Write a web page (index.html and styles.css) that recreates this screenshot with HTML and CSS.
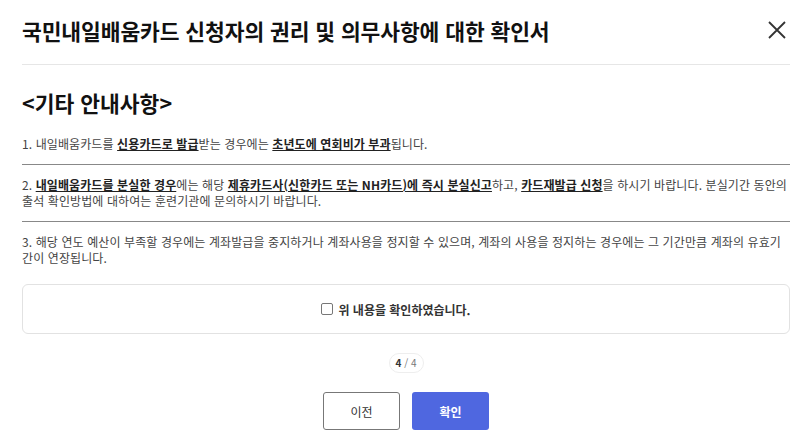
FILE: index.html
```html
<!DOCTYPE html>
<html lang="ko">
<head>
<meta charset="utf-8">
<link rel="stylesheet" href="styles.css">
</head>
<body>
<div class="modal">
  <header class="head">
    <h1 class="title">국민내일배움카드 신청자의 권리 및 의무사항에 대한 확인서</h1>
    <button class="close" aria-label="닫기">
      <svg width="18" height="18" viewBox="0 0 18 18"><path d="M1 1L17 17M17 1L1 17" stroke="#333" stroke-width="1.8" fill="none"/></svg>
    </button>
  </header>
  <h2 class="sub">&lt;기타 안내사항&gt;</h2>
  <ol class="items">
    <li class="item">1. 내일배움카드를 <b>신용카드로 발급</b>받는 경우에는 <b>초년도에 연회비가 부과</b>됩니다.</li>
    <li class="item">2. <b>내일배움카드를 분실한 경우</b>에는 해당 <b>제휴카드사(신한카드 또는 NH카드)에 즉시 분실신고</b>하고, <b>카드재발급 신청</b>을 하시기 바랍니다. 분실기간 동안의 출석 확인방법에 대하여는 훈련기관에 문의하시기 바랍니다.</li>
    <li class="item">3. 해당 연도 예산이 부족할 경우에는 계좌발급을 중지하거나 계좌사용을 정지할 수 있으며, 계좌의 사용을 정지하는 경우에는 그 기간만큼 계좌의 유효기간이 연장됩니다.</li>
  </ol>
  <div class="agree">
    <label class="check"><span class="box"></span>위 내용을 확인하였습니다.</label>
  </div>
  <div class="pager"><span class="pill"><b>4</b> / 4</span></div>
  <div class="actions">
    <button class="btn prev">이전</button>
    <button class="btn ok">확인</button>
  </div>
</div>
</body>
</html>
```
FILE: styles.css
```css
* { box-sizing: border-box; }
html, body { margin: 0; padding: 0; background: #fff; }
body { font-family: "Noto Sans CJK KR", "Noto Sans", sans-serif; color: #444; }
.modal { padding: 0 15px 0 22px; }
.head {
  display: flex; align-items: center; justify-content: space-between;
  height: 65px; padding-bottom: 4px; border-bottom: 1px solid #e6e6e6;
}
.title { margin: 0; font-size: 21.5px; font-weight: 700; color: #111; letter-spacing: -0.1px; }
.close { border: 0; background: none; padding: 0; margin-right: 4px; width: 18px; height: 18px; cursor: pointer; display: flex; }
.sub { margin: 0; padding-top: 24px; font-size: 21.5px; font-weight: 700; color: #111; line-height: 28px; }
.items { list-style: none; margin: 0; padding: 0; padding-top: 7px; }
.item {
  font-size: 12px; line-height: 16px; padding: 12px 0;
  border-bottom: 1px solid #888; letter-spacing: 0.1px;
}
.item:last-child { border-bottom: 0; }
.item b { color: #222; text-decoration: underline; font-weight: 700; }
.agree {
  margin-top: 6px; height: 50px; border: 1px solid #e2e2e2; border-radius: 6px;
  display: flex; align-items: center; justify-content: center; padding-right: 20px;
}
.check { display: flex; align-items: center; gap: 5px; font-size: 12px; font-weight: 700; color: #333; }
.box { width: 12px; height: 12px; border: 1px solid #777; border-radius: 2px; background: #fff; }
.pager { display: flex; justify-content: center; margin-top: 19px; }
.pill {
  font-size: 10px; line-height: 18px; height: 20px; padding: 0 6px;
  border: 1px solid #eee; border-radius: 10px; color: #777;
}
.pill b { color: #333; }
.actions { display: flex; justify-content: center; gap: 12px; margin-top: 19px; }
.btn {
  width: 77px; height: 38px; border-radius: 3px; font-family: inherit; font-size: 12px;
}
.prev { background: #fff; border: 1px solid #777; color: #333; }
.ok { background: #4f67e0; border: 0; color: #fff; font-weight: 700; }
```
